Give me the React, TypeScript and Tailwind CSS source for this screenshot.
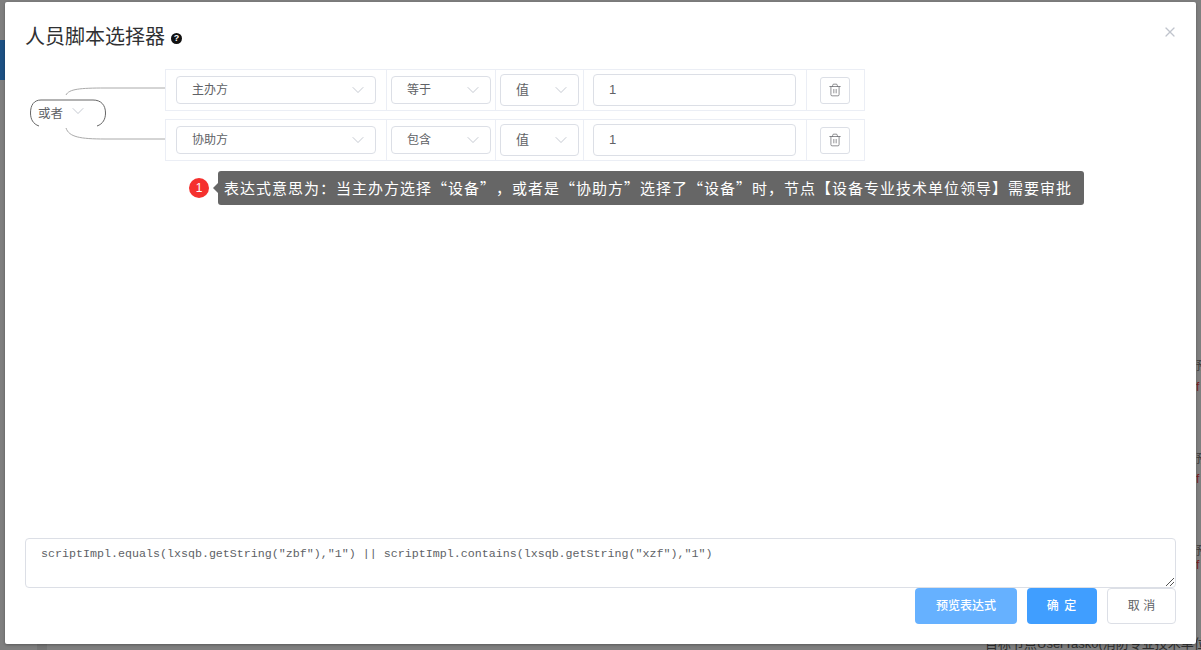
import React from "react";
import { ChevronDown, Trash2, X } from "lucide-react";

const cjk = "font-['Liberation_Sans','Noto_Sans_CJK_SC',sans-serif]";

const Select = ({ label, className, textClass }: { label: string; className: string; textClass?: string }) => (
  <div className={`flex items-center justify-between bg-white border border-[#dcdfe6] rounded-[4px] pl-[15px] pr-[7px] ${className}`}>
    <span className={textClass ?? "text-[12px] text-[#606266]"}>{label}</span>
    <ChevronDown size={20} strokeWidth={0.8} className="text-[#a8aeba]" />
  </div>
);

const Row = ({ field, op }: { field: string; op: string }) => (
  <div className="flex h-[42px] w-[700px] border border-[#ebeef5] bg-white">
    <div className="w-[221px] flex items-center pl-[10px] border-r border-[#ebeef5]">
      <Select label={field} className="w-[200px] h-[28px]" />
    </div>
    <div className="w-[109px] flex items-center pl-[4px] border-r border-[#ebeef5]">
      <Select label={op} className="w-[100px] h-[28px]" />
    </div>
    <div className="w-[88px] flex items-center pl-[4px] border-r border-[#ebeef5]">
      <Select label="值" className="w-[79px] h-[32px]" textClass="text-[13px] text-[#606266]" />
    </div>
    <div className="w-[223px] flex items-center pl-[9px] border-r border-[#ebeef5]">
      <div className="w-[203px] h-[32px] flex items-center border border-[#dcdfe6] rounded-[4px] pl-[15px] text-[13px] text-[#606266]">1</div>
    </div>
    <div className="flex-1 flex items-center pl-[13px]">
      <button className="w-[30px] h-[27px] flex items-center justify-center border border-[#dcdfe6] rounded-[3px] bg-white text-[#606266]">
        <Trash2 size={14} strokeWidth={1.2} />
      </button>
    </div>
  </div>
);

export default function App() {
  return (
    <div className={`relative w-[1201px] h-[650px] overflow-hidden bg-[#7f7f7f] ${cjk}`}>
      {/* page behind the dialog, dimmed */}
      <div className="absolute left-0 top-[40px] w-[5px] h-[40px] bg-[#1d5083]" />
      <div className="absolute left-[37px] top-[644px] w-[10px] h-[6px] bg-[#757575]" />
      <div className="absolute right-0 top-[359px] flex flex-col items-start w-[5px] overflow-hidden text-[12px] leading-[14px]">
        <span className="text-[#3a3a3a]">预</span>
        <span className="text-[#7a1f1f] mt-[7px]">f</span>
        <span className="text-[#3a3a3a] mt-[58px]">预</span>
        <span className="text-[#7a1f1f] mt-[6px]">f</span>
        <span className="text-[#3a3a3a] mt-[58px]">预</span>
        <span className="text-[#7a1f1f]">f</span>
      </div>
      <div className="absolute left-[985px] top-[634px] whitespace-nowrap text-[13px] leading-[20px] text-[#2e2e2e]">目标节点UserTask0(消防专业技术单位领导</div>

      {/* dialog */}
      <div className="absolute left-[5px] top-[2px] w-[1191px] h-[642px] bg-white rounded-[2px] shadow-[0_1px_3px_rgba(0,0,0,0.3)] flex flex-col pl-[20px] pr-[20px]">
        <div className="flex items-center h-[68px] shrink-0 pt-[1px]">
          <span className="text-[20px] text-[#303133] leading-[24px]">人员脚本选择器</span>
          <span className="ml-[6px] mt-[3px] w-[11px] h-[11px] rounded-full bg-[#111] text-white text-[9px] font-bold leading-[11px] text-center">?</span>
        </div>
        <X size={16} strokeWidth={1.8} className="absolute right-[18px] top-[22px] text-[#c0c4cc]" />

        <div className="relative flex flex-col gap-[8px] pl-[140px] shrink-0 -mt-[1px]">
          {/* 或者 node and its two curved links */}
          <svg className="absolute left-[0px] top-[0px]" width="141" height="92" viewBox="0 0 141 92" fill="none">
            <path d="M41 26 C44 20 55 19 80 19 L140 19" stroke="#aaa" />
            <path d="M41 59 C44 68 55 70 80 70 L140 70" stroke="#aaa" />
            <path d="M14 57 C8 55 5.5 50 5.5 44 C5.5 36 9 31 16 31 L68 31 C76 31 80.5 36 80.5 44 C80.5 50 78 55 72 57" stroke="#666" />
          </svg>
          <div className="absolute left-[13px] top-[35px] flex items-center gap-[5px] text-[12.5px] text-[#606266]">
            <span className="mt-[1px]">或者</span>
            <ChevronDown size={20} strokeWidth={0.8} className="text-[#a8aeba] -mt-[6px]" />
          </div>
          <Row field="主办方" op="等于" />
          <Row field="协助方" op="包含" />
        </div>

        <div className="flex items-center mt-[10px] ml-[164px] shrink-0">
          <span className="w-[20px] h-[20px] rounded-full bg-[#f5302e] text-white text-[12px] leading-[20px] text-center">1</span>
          <div className="relative ml-[9px] h-[34px] px-[6px] w-[866px] flex items-center bg-[#666] rounded-[3px] font-['Noto_Sans_CJK_SC',sans-serif] text-[15px] text-white whitespace-nowrap tracking-[1px] [text-spacing-trim:space-all]">
            <span className="absolute -left-[5px] top-[12px] border-y-[5px] border-r-[5px] border-y-transparent border-r-[#666]" />
            表达式意思为：当主办方选择“设备”，或者是“协助方”选择了“设备”时，节点【设备专业技术单位领导】需要审批
          </div>
        </div>

        <div className="flex-1" />

        <div className="h-[50px] shrink-0 relative border border-[#dcdfe6] rounded-[4px] pl-[15px] pt-[6px] font-['Liberation_Mono',monospace] text-[11.66px] leading-[18px] text-[#606266] whitespace-pre">
          {'scriptImpl.equals(lxsqb.getString("zbf"),"1") || scriptImpl.contains(lxsqb.getString("xzf"),"1")'}
          <svg className="absolute right-[1px] bottom-[1px]" width="9" height="9" viewBox="0 0 9 9" stroke="#555" strokeWidth="1">
            <path d="M1 9 L9 1 M5 9 L9 5" />
          </svg>
        </div>

        <div className="flex justify-end mb-[20px] shrink-0">
          <button className="w-[102px] h-[36px] rounded-[4px] bg-[#66b1ff] text-white text-[12px] font-medium">预览表达式</button>
          <button className="ml-[10px] w-[70px] h-[36px] rounded-[4px] bg-[#409eff] text-white text-[12px] font-medium tracking-[1px]">确 定</button>
          <button className="ml-[10px] w-[69px] h-[36px] rounded-[4px] bg-white border border-[#dcdfe6] text-[#606266] text-[12px]">取 消</button>
        </div>
      </div>
    </div>
  );
}
